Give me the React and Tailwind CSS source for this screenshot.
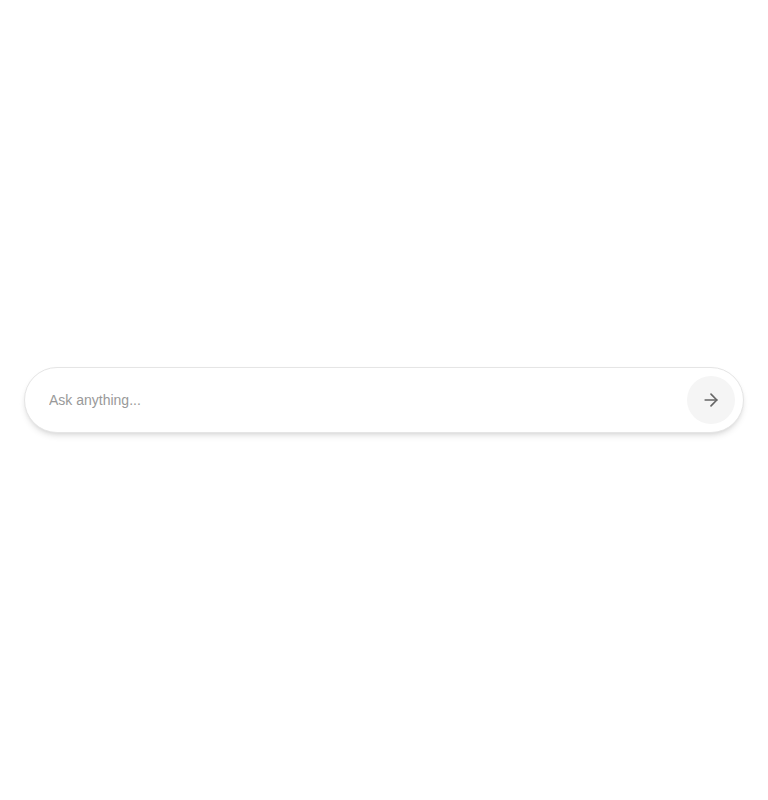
import React from "react";
import { ArrowRight } from "lucide-react";

export default function App() {
  return (
    <div className="h-[800px] w-full bg-white flex items-center justify-center px-6" style={{ fontFamily: '"Liberation Sans", Arial, sans-serif' }}>
      <div className="w-full max-w-[720px] flex items-center rounded-full border border-[#e5e5e5] bg-white pl-6 pr-2 py-2 shadow-[0_4px_6px_-1px_rgba(0,0,0,0.1),0_2px_4px_-2px_rgba(0,0,0,0.1)]">
        <input
          className="flex-1 bg-transparent text-sm text-[#333] placeholder:text-[#999] outline-none"
          placeholder="Ask anything..."
          style={{ fontFamily: '"Liberation Sans", Arial, sans-serif' }}
        />
        <button className="w-12 h-12 rounded-full bg-[#f5f5f5] flex items-center justify-center text-[#666]">
          <ArrowRight size={20} strokeWidth={2} />
        </button>
      </div>
    </div>
  );
}
